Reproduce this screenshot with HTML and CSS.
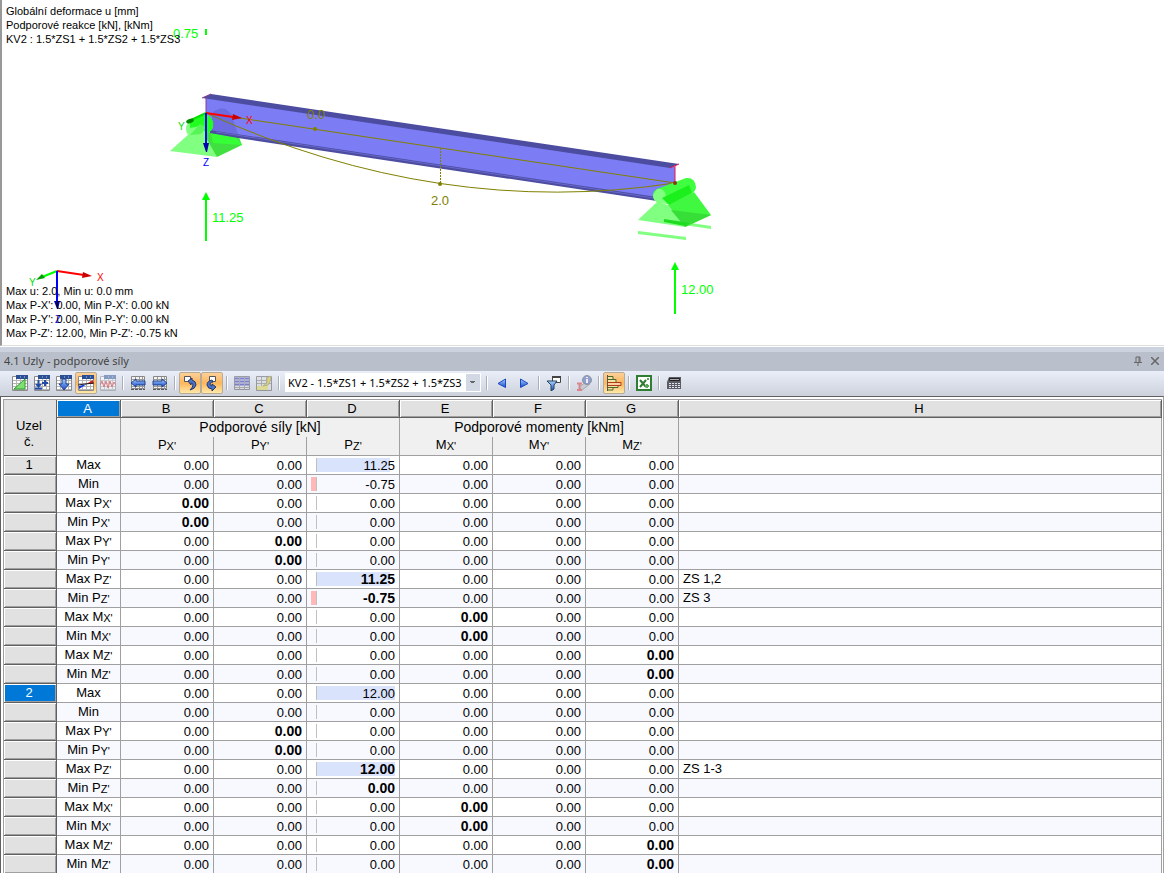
FILE: index.html
```html
<!DOCTYPE html>
<html lang="cs">
<head>
    <meta charset="UTF-8">
    <title>4.1 Uzly - podporové síly</title>
    <link rel="stylesheet" href="styles.css">
</head>
<body>
<main class="scene">
    <svg class="model" viewBox="2 0 1162 345" aria-label="Model">
        <!-- support pyramid -->
        <path d="M190 133 L207 127 L211 134 L217 157 L170 151 Z" fill="#80ff80"/>
        <path d="M207 132 L238 135 L242 145 L217 157 L205 136 Z" fill="#40e040"/>
        <path d="M211 133 L236 137 L242 145 L213 143 Z" fill="#35ff35"/>
        <!-- beam -->
        <path d="M206 98 L675 167 L675 199 L653 197 L206 131 Z" fill="#7c7cf4"/>
        <path d="M213 112 Q224 104 231 114 L238 134 L210 130 Z" fill="#6c6ce0"/>
        <path d="M210 130 L657 197 L657 201 L238 138 L210 133 Z" fill="#4c4ca0"/>
        <path d="M216 132 L654 198" stroke="#6767cc" fill="none"/>
        <path d="M202 98 L211 94 L679 164 L670 168 Z" fill="#4c4ca0"/>
        <path d="M206 98 V113 M202 98 L211 94" stroke="#8b3a90" fill="none"/>
        <path d="M670 168 L679 164 M675 166 V183" stroke="#e8174b" fill="none"/>
        <!-- left support, cylinder in front -->
        <path d="M186 129 Q186 122 193 120 L206 114 Q214 118 213 127 Q211 132 205 133 L194 137 Q186 136 186 129 Z" fill="#80ff80"/>
        <path d="M190 121 L206 114 Q215 119 213 127 Q211 133 206 133 L200 126 L190 128 Z" fill="#20ff20"/>
        <path d="M190 135 L200 124 L206 127 L201 134 Z" fill="#55f555"/>
        <!-- deformed line -->
        <g stroke="#808000" fill="none">
            <path d="M206 113 L675 183"/>
            <path d="M206 113 Q440 219 675 183"/>
            <path d="M440.500 148 V184" stroke-dasharray="2 1"/>
        </g>
        <g fill="#808000">
            <circle cx="315" cy="129" r="2"/>
            <circle cx="440" cy="184" r="2"/>
            <text class="value" x="307" y="119">0.0</text>
            <text class="value" x="431" y="205">2.0</text>
        </g>
        <!-- right support -->
        <path d="M664 219 L711 226 V229 L664 222 Z" fill="#80ff80"/>
        <path d="M657 202 L668 205 L685 227 L638 220 Z" fill="#80ff80"/>
        <path d="M668 205 L694 192 L711 215 L685 227 Z" fill="#40f840"/>
        <path d="M671 210 L711 215 L685 227 Z" fill="#38de38"/>
        <path d="M664 219 L690 223 L685 226 L664 222 Z" fill="#20dc20"/>
        <path d="M657 189 L686 178 Q695 177 696 187 Q696 192 690 194 L670 204 L659 203 Q653 201 653 195 Q653 191 657 189 Z" fill="#40ff40"/>
        <path d="M657 189 Q664 187 666 196 L671 203 L659 203 Q653 201 653 195 Z" fill="#80ff80"/>
        <path d="M662 198 L689 185 L692 193 L669 205 Z" fill="#1cf01c"/>
        <path d="M638 231 L686 237 V240 L638 234 Z" fill="#80ff80"/>
        <circle cx="675" cy="183" r="2" fill="#8a3a1c"/>
        <!-- reactions -->
        <g fill="#00ff00">
            <path d="M205 29 H207 V35 H205 Z"/>
            <path d="M206 192 L210 200 H207 V241 H205 V200 H202 Z"/>
            <path d="M675 262 L679 270 H676 V314 H674 V270 H671 Z"/>
            <text class="value" x="173" y="38">0.75</text>
            <text class="value" x="212" y="222">11.25</text>
            <text class="value" x="681" y="294">12.00</text>
        </g>
        <!-- local axes -->
        <path d="M206 113 L189 121" stroke="#00e000" stroke-width="2"/>
        <ellipse cx="190" cy="121" rx="4" ry="2" fill="#008a00" transform="rotate(-20 190 121)"/>
        <path d="M206 113 L233 117" stroke="#ff0000" stroke-width="2"/>
        <path d="M233 114 L242 118 L232 120 Z" fill="#cc0000"/>
        <path d="M206 113 V145" stroke="#0000ff" stroke-width="2"/>
        <path d="M203 143 H209 L207 152 H206 Z" fill="#0000b0"/>
        <text class="axis" x="246" y="124" fill="#ff0000">X</text>
        <text class="axis" x="178" y="130" fill="#00e000">Y</text>
        <text class="axis" x="203" y="166" fill="#0000ff">Z</text>
        <!-- global axes -->
        <path d="M57 271 L42 277" stroke="#00ff00" stroke-width="2"/>
        <path d="M36 280 L42 274 L45 278 Z" fill="#00a000"/>
        <path d="M57 271 L84 275" stroke="#ff0000" stroke-width="2"/>
        <path d="M83 272 L92 276 L82 278 Z" fill="#cc0000"/>
        <path d="M57 271 V302" stroke="#0000ff" stroke-width="2"/>
        <path d="M54 301 H60 L58 309 H57 Z" fill="#0000b0"/>
        <text class="axis" x="97" y="281" fill="#ff0000">X</text>
        <text class="axis" x="29" y="286" fill="#00e000">Y</text>
        <text class="axis" x="55" y="323" fill="#0000ff">Z</text>
    </svg>
    <div class="notes">
        <p>Globální deformace u [mm]<br>Podporové reakce [kN], [kNm]<br>KV2 : 1.5*ZS1 + 1.5*ZS2 + 1.5*ZS3</p>
        <p>Max u: 2.0, Min u: 0.0 mm<br>Max P-X': 0.00, Min P-X': 0.00 kN<br>Max P-Y': 0.00, Min P-Y': 0.00 kN<br>Max P-Z': 12.00, Min P-Z': -0.75 kN</p>
    </div>
</main>

<section class="panel">
    <header class="panel-title">
        <h1>4.1 Uzly - podporové síly</h1>
        <button class="title-btn" aria-label="Připnout"><svg width="8" height="10" viewBox="0 0 8 10"><path d="M2 6V1H6V6M5 1V6M0 6.500H8M4 7V10" fill="none" stroke="#666"/></svg></button>
        <button class="title-btn" aria-label="Zavřít"><svg width="8" height="8" viewBox="0 0 8 8"><path d="M0 0L8 8M8 0L0 8" stroke="#666" stroke-width="1.500"/></svg></button>
    </header>

    <svg class="defs" aria-hidden="true">
        <linearGradient id="blue" x2="0" y2="1"><stop offset="0" stop-color="#a8d4ff"/><stop offset="1" stop-color="#1746c8"/></linearGradient>
        <symbol id="sheet" viewBox="0 0 16 16">
            <path d="M.500 1.500H15.500V15.500H.500Z" fill="#fff" stroke="#8a8a8a"/>
            <path d="M1 5.500H15M1 8.500H15M1 11.500H15M1 14.500H15M4.500 2V15M8.500 2V15M12.500 2V15" stroke="#b4b4b4"/>
            <path d="M4 0H16V4H4Z" fill="#2b4f92"/><path d="M8.500 1V3M12.500 1V3" stroke="#6d8cc5"/>
        </symbol>
        <symbol id="strip" viewBox="0 0 16 16">
            <path d="M1.500 1.500H14.500V13.500H1.500Z" fill="#f4f4f4" stroke="#888"/>
            <path d="M2 4.500H14M2 11.500H14M5.500 2V13M9.500 2V13M12.500 2V13" stroke="#999"/>
            <path d="M1 14.500H15" stroke="#555" stroke-dasharray="3 1"/>
        </symbol>
    </svg>

    <div class="toolbar">
        <button aria-label="Podpory"><svg viewBox="0 0 16 16"><use href="#sheet"/><path d="M2 14L13 4V14Z" fill="#7fdf72" stroke="#2c9c2c"/></svg></button>
        <button aria-label="Vložit řádek"><svg viewBox="0 0 16 16"><use href="#sheet"/><path d="M4.500 5V11M1 13.500H8M8 8H14M11 5V11" fill="none" stroke="#234aa5" stroke-width="2"/><path d="M1 9H8L4.500 13Z" fill="#234aa5"/></svg></button>
        <button aria-label="Dolů"><svg viewBox="0 0 16 16"><use href="#sheet"/><path d="M6 4H10V9H13L8 15L3 9H6Z" fill="url(#blue)" stroke="#23438c"/></svg></button>
        <button class="on" aria-label="Výsledky"><svg viewBox="0 0 16 16"><use href="#sheet"/><path d="M1 14V11L9 9Z" fill="#1233dd"/><path d="M8 9L15 5V9Z" fill="#e01818"/><path d="M0 10L7 9L16 8" stroke="#222" fill="none"/></svg></button>
        <button class="off" aria-label="Průběh"><svg viewBox="0 0 16 16"><use href="#sheet"/><path d="M0 10L2 6L4 12L6 6L8 13L10 6L12 12L14 7L16 10" stroke="#e01818" fill="none"/></svg></button>
        <i></i>
        <button aria-label="Předchozí tabulka"><svg viewBox="0 0 16 16"><use href="#strip"/><path d="M1 8L6 4V6H15V10H6V12Z" fill="url(#blue)" stroke="#23438c"/></svg></button>
        <button aria-label="Další tabulka"><svg viewBox="0 0 16 16"><use href="#strip"/><path d="M15 8L10 4V6H1V10H10V12Z" fill="url(#blue)" stroke="#23438c"/></svg></button>
        <i></i>
        <button class="on" aria-label="Výběr do grafiky"><svg viewBox="0 0 16 16"><path d="M2.500 1.500H8.500V6.500H2.500Z" fill="#fff" stroke="#555"/><path d="M6 6L10 3V5Q14 6 14 10Q13 14 8 15Q11 12 11 10Q11 8 9 8V10Z" fill="#4c74c8" stroke="#24396c"/></svg></button>
        <button class="on" aria-label="Výběr z grafiky"><svg viewBox="0 0 16 16"><path d="M5.500 1.500H11.500V6.500H5.500Z" fill="#fff" stroke="#555"/><path d="M8 5Q3 6 3 10Q4 14 8 14V16L12 12L8 9V11Q6 11 6 9Q6 7 9 7Z" fill="#4c74c8" stroke="#24396c"/></svg></button>
        <i></i>
        <button class="off" aria-label="Tabulka"><svg viewBox="0 0 16 16"><path d="M.500 1.500H15.500V14.500H.500Z" fill="#ddd" stroke="#555"/><path d="M1 3.500H15M1 6.500H15M1 9.500H15" stroke="#2020b0" stroke-width="2"/><path d="M1 12.500H15M5.500 2V14M10.500 2V14" stroke="#777"/></svg></button>
        <button class="off" aria-label="Upravit"><svg viewBox="0 0 16 16"><path d="M.500 1.500H15.500V15.500H.500Z" fill="#ddd" stroke="#555"/><path d="M1 5.500H15M1 8.500H15M5.500 2V15M10.500 2V15" stroke="#777"/><path d="M1 11H12V15H1Z" fill="#e4dc43"/><path d="M15 1L11 3V8L7 11L12 10L14 6Z" fill="#e0cf08" stroke="#8f8426"/></svg></button>
        <i></i>
        <select aria-label="Zatěžovací stav"><option>KV2 - 1.5*ZS1 + 1.5*ZS2 + 1.5*ZS3</option></select>
        <i></i>
        <button aria-label="Předchozí"><svg viewBox="0 0 16 16"><path d="M11.500 4V12.500L4 8.500Z" fill="url(#blue)" stroke="#1b48c0"/></svg></button>
        <button aria-label="Následující"><svg viewBox="0 0 16 16"><path d="M4.500 4V12.500L12 8.500Z" fill="url(#blue)" stroke="#1b48c0"/></svg></button>
        <i></i>
        <button aria-label="Filtr"><svg viewBox="0 0 16 16"><path d="M6.500 1.500H14.500V7.500H6.500Z" fill="#fff" stroke="#444"/><path d="M6 2H15" stroke="#444" stroke-width="2"/><path d="M1 6H11L8 10V14L5 16V10Z" fill="url(#blue)" stroke="#245"/></svg></button>
        <i></i>
        <button class="off" aria-label="Informace"><svg viewBox="0 0 16 16"><path d="M3 12L10 7L14 9L6 15Z" fill="#bbb" stroke="#777"/><circle cx="11" cy="5" r="4.500" fill="#425cad" stroke="#445"/><path d="M11 2V3M11 4V8" stroke="#fff" stroke-width="2"/><path d="M1 8.500H6M3.500 9V15M1 15H6" stroke="#d33" stroke-width="2"/></svg></button>
        <i></i>
        <button class="on" aria-label="Sloupce"><svg viewBox="0 0 16 16"><path d="M1.500 0V16" stroke="#555"/><path d="M2 1.500H7V4.500H2M2 4.500H10V7.500H2M2 10.500H12V12.500H2M2 12.500H7V15H2" fill="#f4e0a0" stroke="#4c6a2c"/><path d="M2 7.500H15V10.500H2" fill="#fbd0a0" stroke="#b13c1c"/></svg></button>
        <i></i>
        <button aria-label="Excel"><svg viewBox="0 0 16 16"><path d="M1 1H15V15H1Z" fill="#fff" stroke="#2d7d32" stroke-width="2"/><path d="M4 5L10 12M10 5L4 12" stroke="#2d7d32" stroke-width="2"/><path d="M9 11H13M11 9V13M11 4H13" stroke="#58a858" stroke-width="2"/></svg></button>
        <i></i>
        <button aria-label="Kalkulačka"><svg viewBox="0 0 16 16"><path d="M3 2H15V14H1V7Z" fill="#5c5c62"/><path d="M3.500 3.500H13.500V5.500H3.500Z" fill="#aab" stroke="#222"/><path d="M3 8.500H14M3 10.500H14M3 12.500H14" stroke="#dde4f5" stroke-dasharray="2 1"/></svg></button>
    </div>

    <div class="grid">
        <table>
            <colgroup>
                <col class="c-node"><col class="c-label"><col span="6" class="c-num"><col>
            </colgroup>
            <thead>
            <tr class="letters">
                <th class="corner" rowspan="3">Uzel<br>č.</th>
                <th class="active">A</th><th>B</th><th>C</th><th>D</th><th>E</th><th>F</th><th>G</th><th>H</th>
            </tr>
            <tr class="groups">
                <th rowspan="2"></th>
                <th colspan="3">Podporové síly [kN]</th>
                <th colspan="3">Podporové momenty [kNm]</th>
                <th rowspan="2"></th>
            </tr>
            <tr class="symbols">
                <th>P<small>X'</small></th><th>P<small>Y'</small></th><th>P<small>Z'</small></th>
                <th>M<small>X'</small></th><th>M<small>Y'</small></th><th>M<small>Z'</small></th>
            </tr>
            </thead>
            <tbody id="rows"></tbody>
        </table>
    </div>
</section>
<script src="script.js"></script>
</body>
</html>
```
FILE: styles.css
```css
* {
    box-sizing: border-box;
}

body {
    background: #ccd3df;
    color: #000;
    display: flex;
    flex-direction: column;
    font-family: "Liberation Sans", Arial, sans-serif;
    font-size: 13px;
    height: 100vh;
    margin: 0;
    overflow: hidden;
}

.scene {
    background: #fff;
    border-bottom: 1px solid #dedede;
    border-left: 2px solid #989898;
    flex: none;
    position: relative;
}

.model {
    display: block;
    width: 100%;
}

.value {
    font-size: 13px;
}

.axis {
    font-size: 10px;
}

.notes {
    bottom: 5px;
    display: flex;
    flex-direction: column;
    font-size: 11px;
    justify-content: space-between;
    left: 4px;
    line-height: 14px;
    position: absolute;
    top: 4px;
}

.notes p {
    margin: 0;
}

.panel {
    border-top: 1px solid #fff;
    display: flex;
    flex: 1;
    flex-direction: column;
    min-height: 0;
    padding-top: 5px;
}

.panel-title {
    align-items: center;
    background: #bac0cb;
    display: flex;
    flex: none;
    gap: 9px;
    height: 19px;
    padding: 0 5px 2px 4px;
}

.panel-title h1 {
    color: #444;
    flex: 1;
    font: 11px/17px "Noto Sans", sans-serif;
    margin: 0;
}

.title-btn {
    background: none;
    border: 0;
    display: flex;
    padding: 0;
}

.defs {
    height: 0;
    position: absolute;
    width: 0;
}

.toolbar {
    align-items: center;
    background: linear-gradient(#e9eef8, #ccd1dc);
    display: flex;
    flex: none;
    height: 25px;
    padding: 0 9px 2px;
}

.toolbar button {
    background: none;
    border: 1px solid transparent;
    border-radius: 2px;
    flex: none;
    height: 22px;
    padding: 2px;
    width: 22px;
}

.toolbar button svg {
    display: block;
    height: 16px;
    width: 16px;
}

.toolbar .on {
    background: linear-gradient(#fcd09a, #fdb65c 50%, #ffe9a8);
    border-color: #b8ab92;
}

.toolbar .off svg {
    opacity: .5;
}

.toolbar i {
    background: #a9afba;
    border-right: 1px solid #fff;
    flex: none;
    height: 14px;
    margin: 0 3px;
    width: 2px;
}

.toolbar select {
    appearance: none;
    background-color: #fff;
    background-image:
        linear-gradient(to bottom left, #666 50%, transparent 50%),
        linear-gradient(to bottom right, #666 50%, transparent 50%),
        linear-gradient(#d3d9e4, #d3d9e4);
    background-position: right 8px top 8px, right 5px top 8px, right 1px top 1px;
    background-repeat: no-repeat;
    background-size: 3px 3px, 3px 3px, 14px 17px;
    border: 0;
    border-radius: 0;
    color: #000;
    font: 11px "Noto Sans", sans-serif;
    height: 19px;
    margin: 0 2px;
    padding: 0 18px 0 3px;
    width: 196px;
}

.grid {
    background: #fff;
    border: solid #606060;
    border-width: 1px 1px 0;
    border-right-color: #a0a0a0;
    flex: 1;
    min-height: 0;
    overflow: hidden;
    padding: 2px 1px 0 2px;
}

table {
    border-left: 1px solid #a0a0a0;
    border-spacing: 0;
    border-top: 1px solid #a0a0a0;
    table-layout: fixed;
    width: 100%;
}

.c-node {
    width: 53px;
}

.c-label {
    width: 64px;
}

.c-num {
    width: 93px;
}

th,
td {
    border-bottom: 1px solid #a0a0a0;
    border-right: 1px solid #a0a0a0;
    font-weight: normal;
    height: 19px;
    line-height: 16px;
    overflow: hidden;
    padding: 0 4px;
    text-align: center;
    white-space: nowrap;
}

thead th {
    background: #f0f0f0;
}

.letters th,
tbody th {
    background: #e1e1e1;
    border-bottom-color: #606060;
    border-right-color: #606060;
    box-shadow: inset 1px 1px #fff, inset -1px -1px #a0a0a0;
    padding-right: 6px;
}

.letters th {
    height: 18px;
}

.letters .active,
tbody .active {
    background: #0078d7;
    color: #fff;
}

.letters .corner {
    box-shadow: none;
    padding-top: 12px;
}

.groups th,
.symbols th {
    padding-bottom: 2px;
}

.groups th[colspan] {
    border-bottom: 0;
    font-size: 14px;
}

small {
    font-size: 11px;
    position: relative;
    top: 1px;
}

tbody tr:nth-child(even) td {
    background: #f8f9ff;
}

td.num {
    padding-top: 1px;
    position: relative;
    text-align: right;
}

td.note {
    text-align: left;
}

td b,
td span {
    position: relative;
}

td b {
    font-size: 14px;
}

/* axis of the in-cell bar */
td.bar::before {
    background: #c0c0c0;
    bottom: 2px;
    content: "";
    left: 9px;
    position: absolute;
    top: 2px;
    width: 1px;
}

td .fill {
    background: #d9e4fc;
    bottom: 2px;
    left: 10px;
    position: absolute;
    top: 2px;
}

td .fill.minus {
    background: #ffb9b9;
    left: auto;
    right: 83px;
}
```
FILE: script.js
```js
// node, extreme, force, axis, P-Z' value, bold column, load cases
const data = [
    [1, "Max", "", "", 11.25, -1, ""],
    ["", "Min", "", "", -0.75, -1, ""],
    ["", "Max", "P", "X'", 0, 0, ""],
    ["", "Min", "P", "X'", 0, 0, ""],
    ["", "Max", "P", "Y'", 0, 1, ""],
    ["", "Min", "P", "Y'", 0, 1, ""],
    ["", "Max", "P", "Z'", 11.25, 2, "ZS 1,2"],
    ["", "Min", "P", "Z'", -0.75, 2, "ZS 3"],
    ["", "Max", "M", "X'", 0, 3, ""],
    ["", "Min", "M", "X'", 0, 3, ""],
    ["", "Max", "M", "Z'", 0, 5, ""],
    ["", "Min", "M", "Z'", 0, 5, ""],
    [2, "Max", "", "", 12, -1, ""],
    ["", "Min", "", "", 0, -1, ""],
    ["", "Max", "P", "Y'", 0, 1, ""],
    ["", "Min", "P", "Y'", 0, 1, ""],
    ["", "Max", "P", "Z'", 12, 2, "ZS 1-3"],
    ["", "Min", "P", "Z'", 0, 2, ""],
    ["", "Max", "M", "X'", 0, 3, ""],
    ["", "Min", "M", "X'", 0, 3, ""],
    ["", "Max", "M", "Z'", 0, 5, ""],
    ["", "Min", "M", "Z'", 0, 5, ""]
];
const activeNode = 2;
const barWidth = 78;

function cell(value, col, bold) {
    const tag = bold ? "b" : "span";
    let bar = "";
    if (col === 2 && value !== 0) {
        const width = Math.round(Math.abs(value) / 12 * barWidth);
        bar = `<i class="fill${value < 0 ? " minus" : ""}" style="width: ${width}px"></i>`;
    }
    return `<td class="num${col === 2 ? " bar" : ""}">${bar}<${tag}>${value.toFixed(2)}</${tag}></td>`;
}

document.getElementById("rows").innerHTML = data.map(([node, extreme, force, axis, pz, bold, cases]) => {
    const values = [0, 0, pz, 0, 0, 0];
    return `<tr>
        <th${node === activeNode ? ' class="active"' : ""}>${node}</th>
        <td>${extreme}${force ? ` ${force}<small>${axis}</small>` : ""}</td>
        ${values.map((v, i) => cell(v, i, i === bold)).join("")}
        <td class="note">${cases}</td>
    </tr>`;
}).join("");
```
